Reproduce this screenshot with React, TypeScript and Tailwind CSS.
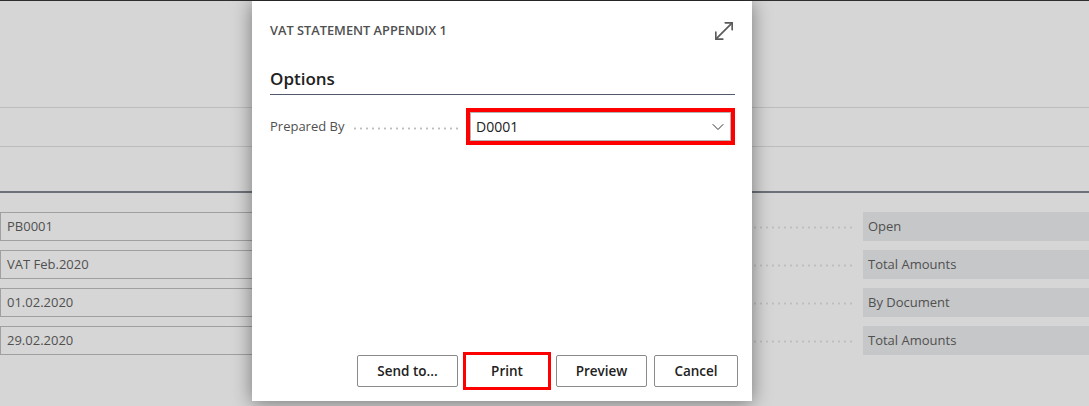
import React from "react";
import { MoveDiagonal, ChevronDown } from "lucide-react";

const leftFields = ["PB0001", "VAT Feb.2020", "01.02.2020", "29.02.2020"];
const rightFields = ["Open", "Total Amounts", "By Document", "Total Amounts"];

const font = { fontFamily: '"Open Sans", "Noto Sans", sans-serif' };

const Leader = ({ className = "" }: { className?: string }) => (
  <div
    className={`h-[3px] bg-[radial-gradient(circle,#bdbdbd_1px,transparent_1.2px)] bg-[length:6px_3px] ${className}`}
  />
);

const Btn = ({ label, w }: { label: string; w: string }) => (
  <button
    className={`h-[32px] ${w} rounded-[2px] border border-[#8a8a8a] bg-white text-[13.5px] font-semibold text-[#212121]`}
  >
    {label}
  </button>
);

export default function App() {
  return (
    <div className="relative h-[406px] w-[1089px] overflow-hidden bg-[#d6d6d6]" style={font}>
      {/* page behind the dialog */}
      <div className="flex h-full flex-col border-t border-[#2e2e2e]">
        <div className="h-[107px] border-b border-[#bdbdbd]" />
        <div className="h-[39px] border-b border-[#bdbdbd]" />
        <div className="h-[46px] border-b-2 border-[#6e7179]" />
        <div className="mt-[19px] flex">
          <div className="flex w-[560px] flex-col gap-[9px]">
            {leftFields.map((v) => (
              <div
                key={v}
                className="flex h-[29px] items-center border border-[#a0a0a0] px-[6px] text-[13px] text-[#505050]"
              >
                {v}
              </div>
            ))}
          </div>
          <div className="flex flex-1 flex-col gap-[9px]">
            {rightFields.map((v, i) => (
              <div key={i} className="flex h-[29px] items-center">
                <div className="flex flex-1 items-center pr-[9px]">
                  <Leader className="ml-auto w-[102px] translate-y-[1px]" />
                </div>
                <div className="flex h-full w-[226px] items-center bg-[#c6c7c8] px-[5px] text-[13px] text-[#505050]">
                  {v}
                </div>
              </div>
            ))}
          </div>
        </div>
      </div>

      {/* dialog */}
      <div className="absolute left-[252px] top-[1px] flex h-[400px] w-[500px] flex-col bg-white pl-[18px] pr-[17px] shadow-[0_2px_18px_rgba(0,0,0,0.45)]">
        <div className="flex h-[56px] items-center justify-between pt-[4px]">
          <span className="text-[12.8px] font-semibold text-[#505050]">
            VAT STATEMENT APPENDIX 1
          </span>
          <MoveDiagonal size={28} strokeWidth={1.4} className="mr-[-3px] text-[#5a5a5a]" />
        </div>
        <div className="mt-[10px] border-b border-[#505a6a] pb-[3px] text-[17px] font-semibold leading-[24px] text-[#212121]">
          Options
        </div>
        <div className="mt-[13px] flex items-center">
          <span className="text-[13px] text-[#505050]">Prepared By</span>
          <Leader className="ml-[8px] mr-[8px] flex-1 translate-y-[2px]" />
          <div className="w-[269px] border-4 border-[#ff0000]">
            <div className="flex h-[29px] items-center justify-between border border-[#b4b4b4] pl-[5px] pr-[2px] text-[14px] text-[#212121]">
              <span>D0001</span>
              <ChevronDown size={20} strokeWidth={1.2} className="text-[#333]" />
            </div>
          </div>
        </div>
        <div className="mt-auto mb-[11px] mr-[-3px] flex items-center justify-end">
          <Btn label="Send to..." w="w-[101px]" />
          <div className="ml-[5px] border-[3px] border-[#ff0000]">
            <button className="block h-[32px] w-[82px] bg-white text-[13.5px] font-semibold text-[#212121]">
              Print
            </button>
          </div>
          <div className="ml-[5px] flex gap-[7px]">
            <Btn label="Preview" w="w-[91px]" />
            <Btn label="Cancel" w="w-[84px]" />
          </div>
        </div>
      </div>
    </div>
  );
}
